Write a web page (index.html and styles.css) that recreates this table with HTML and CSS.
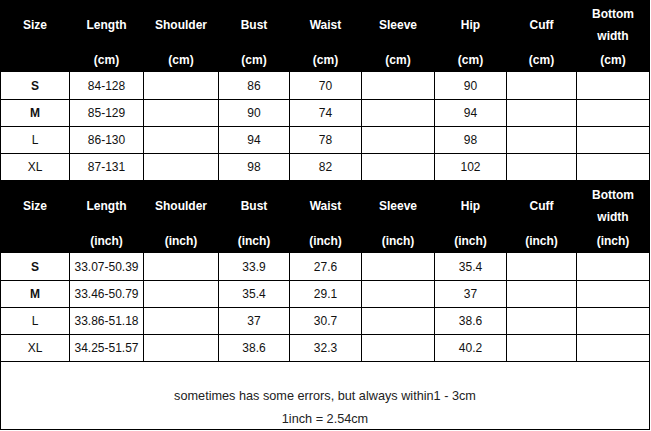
FILE: index.html
```html
<!DOCTYPE html>
<html>
<head>
<meta charset="utf-8">
<link rel="stylesheet" href="styles.css">
</head>
<body>
<div class="chart">
  <div class="hd"><div class="nm">Size</div><div class="un"></div></div>
  <div class="hd"><div class="nm">Length</div><div class="un">(cm)</div></div>
  <div class="hd"><div class="nm">Shoulder</div><div class="un">(cm)</div></div>
  <div class="hd"><div class="nm">Bust</div><div class="un">(cm)</div></div>
  <div class="hd"><div class="nm">Waist</div><div class="un">(cm)</div></div>
  <div class="hd"><div class="nm">Sleeve</div><div class="un">(cm)</div></div>
  <div class="hd"><div class="nm">Hip</div><div class="un">(cm)</div></div>
  <div class="hd"><div class="nm">Cuff</div><div class="un">(cm)</div></div>
  <div class="hd"><div class="nm">Bottom<br>width</div><div class="un">(cm)</div></div>

  <div class="c sz b">S</div><div class="c">84-128</div><div class="c"></div><div class="c">86</div><div class="c">70</div><div class="c"></div><div class="c">90</div><div class="c"></div><div class="c"></div>
  <div class="c sz b">M</div><div class="c">85-129</div><div class="c"></div><div class="c">90</div><div class="c">74</div><div class="c"></div><div class="c">94</div><div class="c"></div><div class="c"></div>
  <div class="c sz">L</div><div class="c">86-130</div><div class="c"></div><div class="c">94</div><div class="c">78</div><div class="c"></div><div class="c">98</div><div class="c"></div><div class="c"></div>
  <div class="c sz">XL</div><div class="c">87-131</div><div class="c"></div><div class="c">98</div><div class="c">82</div><div class="c"></div><div class="c">102</div><div class="c"></div><div class="c"></div>

  <div class="hd"><div class="nm">Size</div><div class="un"></div></div>
  <div class="hd"><div class="nm">Length</div><div class="un">(inch)</div></div>
  <div class="hd"><div class="nm">Shoulder</div><div class="un">(inch)</div></div>
  <div class="hd"><div class="nm">Bust</div><div class="un">(inch)</div></div>
  <div class="hd"><div class="nm">Waist</div><div class="un">(inch)</div></div>
  <div class="hd"><div class="nm">Sleeve</div><div class="un">(inch)</div></div>
  <div class="hd"><div class="nm">Hip</div><div class="un">(inch)</div></div>
  <div class="hd"><div class="nm">Cuff</div><div class="un">(inch)</div></div>
  <div class="hd"><div class="nm">Bottom<br>width</div><div class="un">(inch)</div></div>

  <div class="c sz b">S</div><div class="c">33.07-50.39</div><div class="c"></div><div class="c">33.9</div><div class="c">27.6</div><div class="c"></div><div class="c">35.4</div><div class="c"></div><div class="c"></div>
  <div class="c sz b">M</div><div class="c">33.46-50.79</div><div class="c"></div><div class="c">35.4</div><div class="c">29.1</div><div class="c"></div><div class="c">37</div><div class="c"></div><div class="c"></div>
  <div class="c sz">L</div><div class="c">33.86-51.18</div><div class="c"></div><div class="c">37</div><div class="c">30.7</div><div class="c"></div><div class="c">38.6</div><div class="c"></div><div class="c"></div>
  <div class="c sz">XL</div><div class="c">34.25-51.57</div><div class="c"></div><div class="c">38.6</div><div class="c">32.3</div><div class="c"></div><div class="c">40.2</div><div class="c"></div><div class="c"></div>

  <div class="foot">
    <p>sometimes has some errors, but always within1 - 3cm</p>
    <p>1inch = 2.54cm</p>
  </div>
</div>
</body>
</html>
```
FILE: styles.css
```css
html, body {
  margin: 0;
  padding: 0;
  background: #fff;
}
body {
  font-family: "Liberation Sans", Arial, sans-serif;
  font-size: 12px;
  color: #111;
}
.chart {
  width: 648px;
  background: #000;
  padding: 0 1px 1px 1px;
  display: grid;
  grid-template-columns: 68px 73px 74px 70px 71px 72px 71px 69px 72px;
  grid-template-rows: 71px 27px 26px 26px 26px 71px 27px 26px 26px 26px 67px;
  gap: 1px;
}
.hd {
  background: #000;
  color: #fff;
  font-weight: bold;
  display: flex;
  flex-direction: column;
  align-items: center;
  text-align: center;
}
.hd .nm {
  height: 48px;
  padding-top: 1px;
  display: flex;
  align-items: center;
  justify-content: center;
  line-height: 22px;
}
.hd .un {
  height: 22px;
  line-height: 22px;
}
.c {
  background: #fff;
  display: flex;
  align-items: center;
  justify-content: center;
  line-height: 14px;
}
.c.b {
  font-weight: bold;
}
.foot {
  grid-column: 1 / -1;
  background: #fff;
  padding-top: 23px;
  text-align: center;
  color: #222;
  font-size: 12.7px;
}
.foot p {
  margin: 0;
  line-height: 23px;
}
```
